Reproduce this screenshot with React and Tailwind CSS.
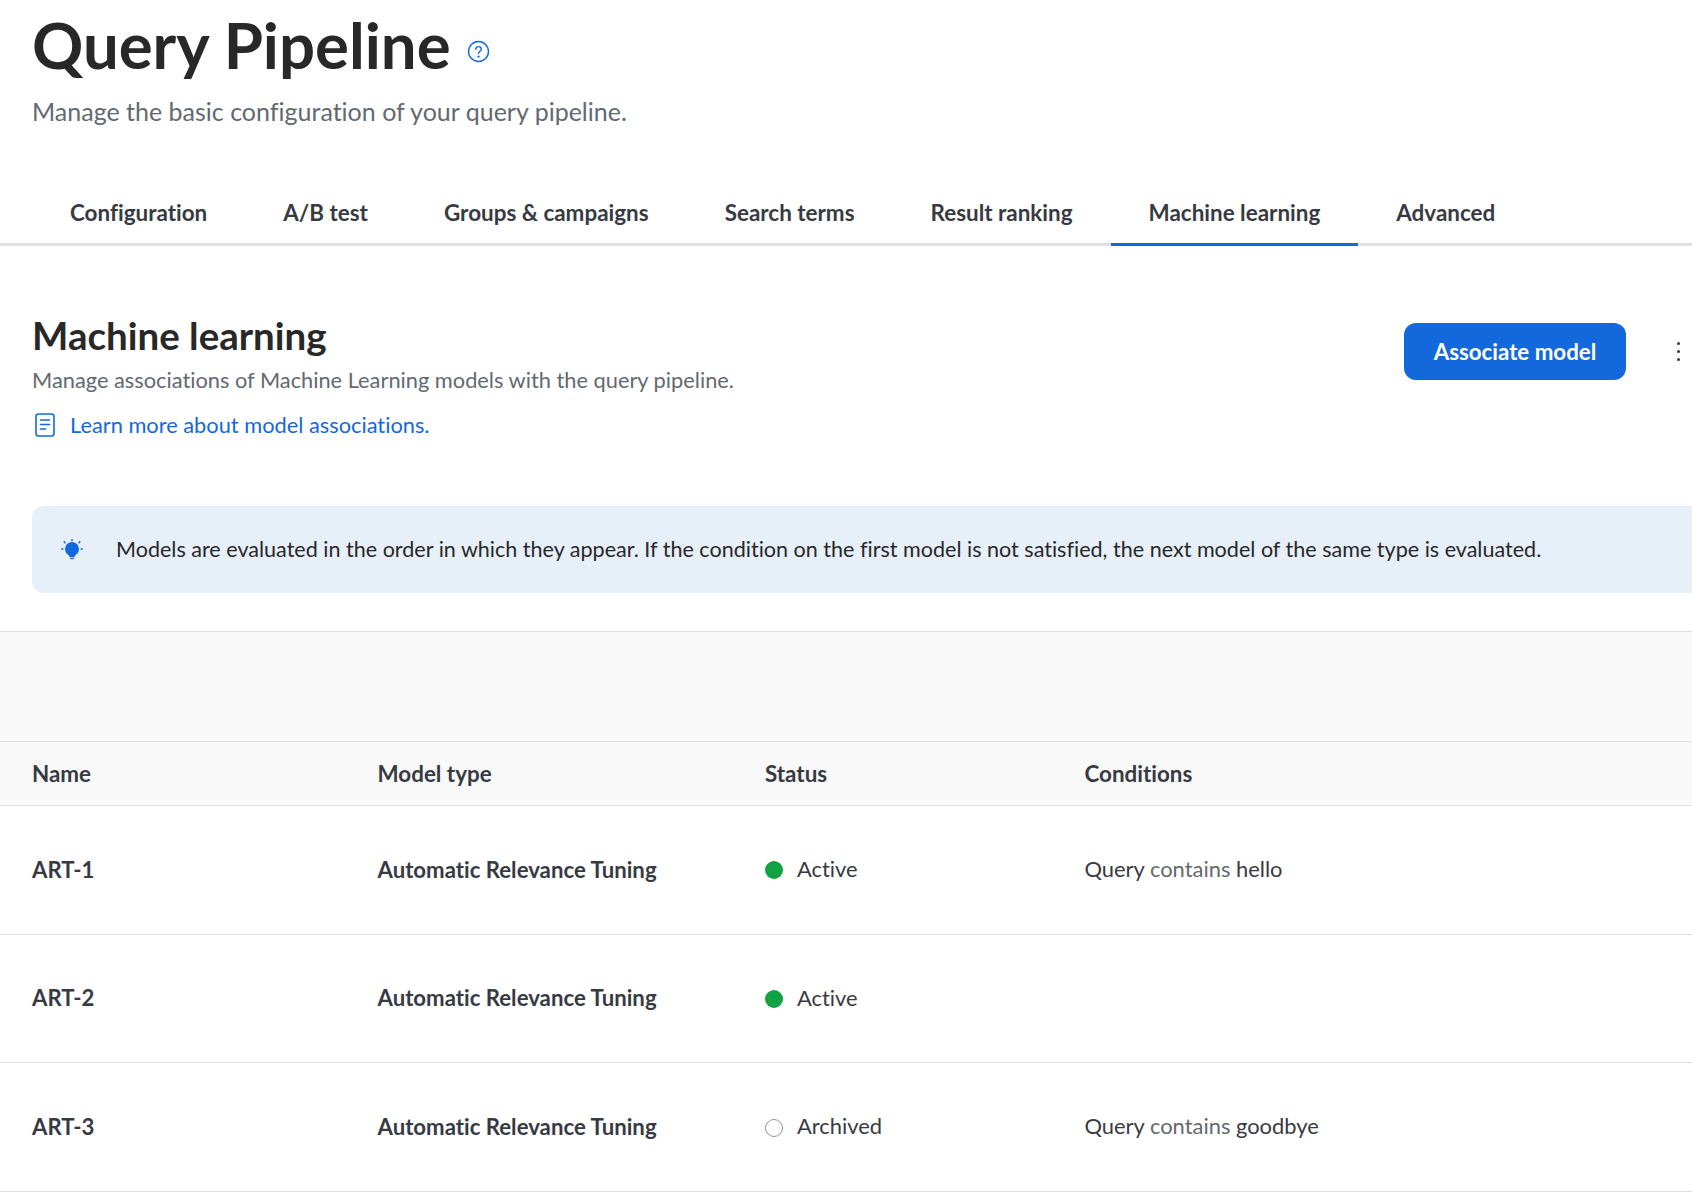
const tabs = ['Configuration', 'A/B test', 'Groups & campaigns', 'Search terms', 'Result ranking', 'Machine learning', 'Advanced'];

const rows = [
  { name: 'ART-1', status: 'Active', condition: 'hello' },
  { name: 'ART-2', status: 'Active', condition: null },
  { name: 'ART-3', status: 'Archived', condition: 'goodbye' },
];

const HelpIcon = () => (
  <svg className="mt-[9px]" width="23" height="23" viewBox="0 0 23 23" fill="none" stroke="#1369dc" strokeWidth="1.4" strokeLinecap="round">
    <circle cx="11.5" cy="11.5" r="10" />
    <path d="M8.8 9.2c0-1.6 1.2-2.6 2.8-2.6s2.7 1 2.7 2.4c0 2.2-2.8 2.2-2.8 4.6" />
    <circle cx="11.5" cy="16.6" r="0.5" />
  </svg>
);

const DocIcon = () => (
  <svg width="20" height="24" viewBox="0 0 20 24" fill="none" stroke="#1369dc" strokeWidth="1.6" strokeLinecap="round">
    <rect x="1" y="1" width="18" height="22" rx="2.5" />
    <path d="M5.5 7h9M5.5 11.5h9M5.5 16h5" />
  </svg>
);

const BulbIcon = () => (
  <svg width="22" height="22" viewBox="0 0 22 22" fill="none" stroke="#1369dc" strokeWidth="1.6" strokeLinecap="round">
    <circle cx="11" cy="10" r="7" fill="#1369dc" stroke="none" />
    <path d="M7.8 15h6.4l-.6 3.2H8.4z" fill="#1369dc" stroke="none" />
    <path d="M8.8 19c.4 1.6 4 1.6 4.4 0z" fill="#1369dc" stroke="none" />
    <path d="M11 .8v.8M3.2 2.8l.8.9M18.8 2.8l-.8.9M.8 10h1M20.2 10h1" />
  </svg>
);

const StatusDot = ({ status }) => (
  status === 'Active'
    ? <span className="w-[18px] h-[18px] rounded-full bg-[#12a244] translate-y-[1px]" />
    : <span className="w-[18px] h-[18px] rounded-full border-[1.5px] border-[#8f94ad] translate-y-[1px]" />
);

export default function App() {
  return (
    <div className="w-full h-[1194px] overflow-hidden bg-white font-['Lato',sans-serif] [font-variant-ligatures:none]">
      <div className="pl-[32px] h-[94px] flex items-center gap-[16px]">
        <h1 className="-mt-[4px] text-[63.5px] font-bold text-[#282829] leading-none">Query Pipeline</h1>
        <HelpIcon />
      </div>
      <p className="pl-[32px] h-[36px] flex items-center text-[25px] text-[#626971]">Manage the basic configuration of your query pipeline.</p>

      <div className="mt-[51px] h-[65px] flex border-b-[3px] border-[#e0e1e6]">
        {tabs.map((tab, i) => (
          <div
            key={tab}
            className={`h-[65px] px-[38px] pt-[1px] flex items-center text-[22.45px] font-bold text-[#373a42] border-b-[3px] ${i === 5 ? 'border-[#1369dc]' : 'border-transparent'} ${i === 0 ? 'ml-[32px]' : ''}`}
          >
            {tab}
          </div>
        ))}
      </div>

      <div className="flex justify-between pl-[32px] pr-[11px]">
        <div className="pt-[68px]">
          <h2 className="h-[44px] flex items-center text-[38.5px] font-bold text-[#282829]">Machine learning</h2>
          <p className="mt-[6px] h-[32px] flex items-center text-[21.8px] text-[#626971]">Manage associations of Machine Learning models with the query pipeline.</p>
          <a className="mt-[15px] h-[28px] pl-[3px] flex items-center gap-[15px] text-[21.8px] text-[#1369dc]">
            <DocIcon />
            Learn more about model associations.
          </a>
        </div>
        <div className="pt-[77px] flex items-start gap-[51px]">
          <button className="w-[222px] h-[57px] rounded-[12px] bg-[#1369dc] text-white text-[22.3px] font-bold">Associate model</button>
          <div className="mt-[19px] w-[4px] flex flex-col gap-[5px]">
            <span className="w-[3px] h-[3px] rounded-full bg-[#373a42]" />
            <span className="w-[3px] h-[3px] rounded-full bg-[#373a42]" />
            <span className="w-[3px] h-[3px] rounded-full bg-[#373a42]" />
          </div>
        </div>
      </div>

      <div className="mt-[67px] ml-[32px] h-[87px] pl-[29px] flex items-center gap-[33px] rounded-l-[12px] bg-[#e7eff9]">
        <BulbIcon />
        <span className="text-[21.55px] text-[#282829]">Models are evaluated in the order in which they appear. If the condition on the first model is not satisfied, the next model of the same type is evaluated.</span>
      </div>

      <div className="mt-[38px] h-[110px] border-t border-[#e0e1e6] bg-[#f9f9f9]" />

      <div className="grid grid-cols-[345.5px_387.5px_319.5px_1fr] h-[65px] items-center pl-[32px] border-y border-[#e0e1e6] bg-[#f9f9f9] text-[22.4px] font-bold text-[#373a42]">
        <div>Name</div>
        <div>Model type</div>
        <div>Status</div>
        <div>Conditions</div>
      </div>

      {rows.map((row) => (
        <div key={row.name} className="grid grid-cols-[345.5px_387.5px_319.5px_1fr] h-[128.7px] items-center pl-[32px] pb-[1px] border-b border-[#e0e1e6] text-[21.9px] text-[#373a42]">
          <div className="font-bold text-[22.2px]">{row.name}</div>
          <div className="font-bold text-[22.2px]">Automatic Relevance Tuning</div>
          <div className="flex items-center gap-[14px]">
            <StatusDot status={row.status} />
            {row.status}
          </div>
          <div>
            {row.condition && (
              <>Query <span className="text-[#626971]">contains</span> {row.condition}</>
            )}
          </div>
        </div>
      ))}
    </div>
  );
}
